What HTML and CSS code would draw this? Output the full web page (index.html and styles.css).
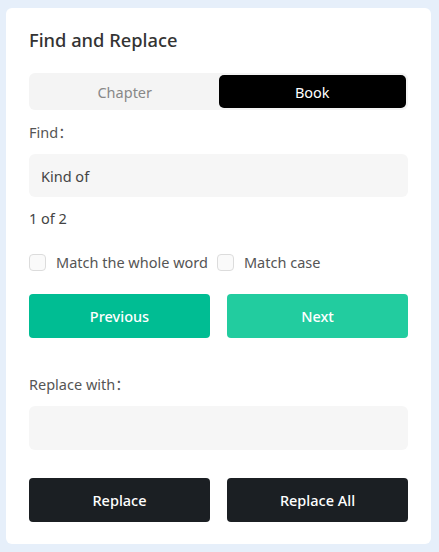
FILE: index.html
```html
<!DOCTYPE html>
<html lang="en">
<head>
    <meta charset="UTF-8">
    <meta name="viewport" content="width=device-width, initial-scale=1.0">
    <title>Find and Replace</title>
    <link rel="stylesheet" href="styles.css">
</head>
<body>
    <div class="panel">
        <!-- Header -->
        <div class="panel-title">Find and Replace</div>

        <!-- Scope tabs -->
        <div class="tabs">
            <div class="tab">Chapter</div>
            <div class="tab active">Book</div>
        </div>

        <!-- Find -->
        <div class="label find-label">Find：</div>
        <div class="field">Kind of</div>
        <div class="count">1 of 2</div>

        <div class="options">
            <label class="option"><span class="box"></span>Match the whole word</label>
            <label class="option"><span class="box"></span>Match case</label>
        </div>

        <div class="btn-row nav-row">
            <button class="btn btn-prev">Previous</button>
            <button class="btn btn-next">Next</button>
        </div>

        <!-- Replace -->
        <div class="label replace-label">Replace with：</div>
        <div class="field"></div>

        <div class="btn-row replace-row">
            <button class="btn btn-dark">Replace</button>
            <button class="btn btn-dark">Replace All</button>
        </div>
    </div>
</body>
</html>
```

FILE: styles.css
```css
* {
    margin: 0;
    padding: 0;
    box-sizing: border-box;
}

body {
    background-color: #e6effa;
    font-family: 'Noto Sans', 'Noto Sans CJK SC', sans-serif;
    color: #333;
}

/* Card */
.panel {
    width: 425px;
    height: 536px;
    margin: 8px 0 0 6px;
    background-color: #fff;
    border-radius: 6px;
    padding: 22px 23px 22px 23px;
}

.panel-title {
    font-size: 18.3px;
    font-weight: 500;
    line-height: 20px;
    color: #333;
}

/* Tabs */
.tabs {
    display: flex;
    margin-top: 23px;
    height: 37px;
    padding: 2px;
    background-color: #f4f4f4;
    border-radius: 6px;
}

.tab {
    flex: 1;
    display: flex;
    align-items: center;
    justify-content: center;
    font-size: 14.5px;
    color: #888;
    border-radius: 5px;
}

.tab.active {
    background-color: #000;
    color: #fff;
}

/* Labels & fields */
.label {
    font-size: 14.5px;
    line-height: 20px;
    color: #555;
}

.find-label {
    margin-top: 12px;
}

.replace-label {
    margin-top: 36px;
}

.field {
    margin-top: 12px;
    height: 44px;
    background-color: #f6f6f6;
    border-radius: 6px;
    padding: 0 12px;
    display: flex;
    align-items: center;
    font-size: 14.5px;
    color: #444;
}

.find-label + .field {
    height: 43px;
}

.count {
    margin-top: 11px;
    font-size: 14.5px;
    line-height: 20px;
    color: #444;
}

/* Checkboxes */
.options {
    display: flex;
    gap: 9px;
    margin-top: 24px;
    height: 20px;
    align-items: center;
}

.option {
    display: flex;
    align-items: center;
    font-size: 14.5px;
    color: #555;
}

.box {
    width: 17px;
    height: 17px;
    border: 1px solid #dcdcdc;
    border-radius: 4px;
    background-color: #fafafa;
    margin-right: 10px;
}

/* Buttons */
.btn-row {
    display: flex;
    gap: 17px;
}

.nav-row {
    margin-top: 22px;
}

.replace-row {
    margin-top: 28px;
}

.btn {
    flex: 1;
    height: 44px;
    border: none;
    border-radius: 4px;
    font-family: 'Noto Sans', sans-serif;
    font-size: 14.5px;
    font-weight: 500;
    color: #fff;
    cursor: pointer;
}

.btn-prev {
    background-color: #00bd93;
}

.btn-next {
    background-color: #22cc9f;
}

.btn-dark {
    background-color: #1b1f23;
}
```
